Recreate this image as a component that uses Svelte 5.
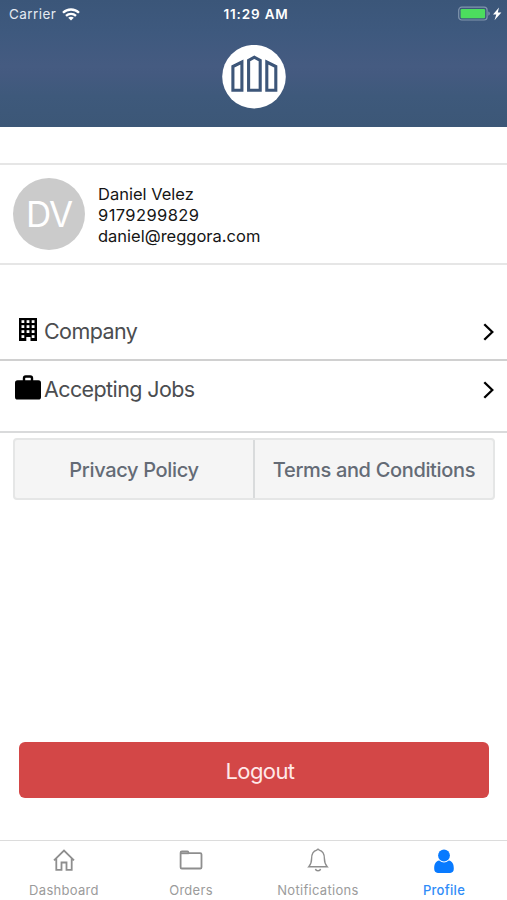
<script>
  const rows = [
    { label: 'Company', icon: 'building' },
    { label: 'Accepting Jobs', icon: 'briefcase' }
  ];
  const tabs = ['Dashboard', 'Orders', 'Notifications', 'Profile'];
</script>

<div class="screen">
  <header>
    <div class="status">
      <div class="left">
        <span class="carrier">Carrier</span>
        <svg width="18" height="13" viewBox="0 0 18 13" fill="none" stroke="#fff" stroke-width="2.3">
          <path d="M1 4.7C5.4.4 12.6.4 17 4.7M4 7.9c2.9-2.8 7.1-2.8 10 0" />
          <path d="M9 12.5 6.2 9.8c1.6-1.5 4-1.5 5.6 0z" fill="#fff" stroke="none" />
        </svg>
      </div>
      <span class="time">11:29 AM</span>
      <svg class="battery" width="44" height="16" viewBox="0 0 44 16">
        <rect x=".7" y="1.2" width="28.4" height="12.8" rx="3" fill="none" stroke="#8195ad" stroke-width="1.2" />
        <rect x="2.6" y="3" width="24.5" height="9.2" rx="1.2" fill="#4cdd5e" />
        <path d="M30.3 5.5c2 .6 2 3.6 0 4.2z" fill="#8195ad" />
        <path d="M41 1.4 35 8.6h3.3l-1.8 5.6L43.4 6.6h-3.6z" fill="#fff" />
      </svg>
    </div>
    <svg class="logo" width="64" height="64" viewBox="0 0 64 64">
      <circle cx="32" cy="31.7" r="31.8" fill="#fff" />
      <g fill="none" stroke="#3d5679" stroke-width="3.1">
        <path d="M10.9 45.2V21.5l9-4.4v28.1zM26.6 45.2V15.4l5.7-3.2 5.9 3.2v29.8zM44.8 45.2V17.1l9 4.4v23.7z" />
      </g>
    </svg>
  </header>

  <section class="user">
    <div class="avatar"><span>DV</span></div>
    <div class="details">
      <div class="name">Daniel Velez</div>
      <div class="phone">9179299829</div>
      <div class="email">daniel@reggora.com</div>
    </div>
  </section>

  <nav class="rows">
    {#each rows as row}
      <div class="row {row.icon}">
        {#if row.icon === 'building'}
          <svg class="ico" width="28" height="26" viewBox="0 0 28 26">
            <path d="M5 1h18v23h-6.5v-4h-4.2v4H5z" fill="#000" />
            <g fill="#fff">
              {#each [3.2, 8.2, 13.2] as y}
                {#each [7.5, 12.6, 17.7] as x}
                  <rect {x} {y} width="2.8" height="2.8" />
                {/each}
              {/each}
              <rect x="7.5" y="18.2" width="2.8" height="2.8" />
              <rect x="17.7" y="18.2" width="2.8" height="2.8" />
            </g>
          </svg>
        {:else}
          <svg class="ico" width="28" height="26" viewBox="0 0 28 26">
            <path d="M10 7V3.2q0-1.7 1.7-1.7h4.6q1.7 0 1.7 1.7V7" fill="none" stroke="#000" stroke-width="2.4" />
            <rect x="1" y="5.3" width="26" height="19.2" rx="2.6" />
          </svg>
        {/if}
        <span class="label">{row.label}</span>
        <svg class="chev" width="14" height="20" viewBox="0 0 14 20" fill="none" stroke="#000" stroke-width="2.3">
          <path d="m2.3 2.2 8 7.8-8 7.8" />
        </svg>
      </div>
    {/each}
  </nav>

  <div class="legal">
    <button><span class="privacy">Privacy Policy</span></button>
    <button><span class="terms">Terms and Conditions</span></button>
  </div>

  <button class="logout">Logout</button>

  <footer>
    {#each tabs as tab, i}
      <div class="tab" class:active={i === 3}>
        <svg width="26" height="28" viewBox="0 0 26 28" fill="none" stroke="#8e8e8e" stroke-width="1.8">
          {#if i === 0}
            <path d="M3 14.3 13 4.5l10 9.8M5.3 12.5v11.3h5.2v-7.3h5v7.3h5.2V12.5" />
          {:else if i === 1}
            <path d="M2.6 8.5V6.8q0-1.3 1.3-1.3h5.3q.9 0 1.3.9l.4.8h11.3q1.3 0 1.3 1.3v12.7q0 1.3-1.3 1.3H3.9q-1.3 0-1.3-1.3z" />
            <path d="M2.8 7.3h8" />
          {:else if i === 2}
            <path d="M11.8 4.1q1.2-2 2.4 0c4.5 1.1 5.2 4.8 5.2 8.5 0 4.5.8 6 2.8 8.1H3.8c2-2.1 2.8-3.6 2.8-8.1 0-3.7.7-7.4 5.2-8.5z" stroke-width="1.4" />
            <path d="M10.5 22.8c.4 2.5 4.6 2.5 5 0" stroke-width="1.5" />
          {:else}
            <g fill="#087aff" stroke="none">
              <circle cx="13" cy="9.5" r="5.9" />
              <path d="M8.2 14.6q4.8 3.8 9.6 0c3.7.7 5 3.7 5 8.2 0 2.7-1.3 4.1-3.6 4.1H6.8c-2.3 0-3.6-1.4-3.6-4.1 0-4.5 1.3-7.5 5-8.2z" />
            </g>
          {/if}
        </svg>
        <span>{tab}</span>
      </div>
    {/each}
  </footer>
</div>

<style>
  .screen {
    width: 100%;
    height: 900px;
    display: flex;
    flex-direction: column;
    background: #fff;
    font-family: Inter, "Liberation Sans", sans-serif;
    overflow: hidden;
  }
  .screen, .screen * { box-sizing: border-box; }
  svg { display: block; flex: none; }
  button { font: inherit; margin: 0; padding: 0; border: 0; }
  span, .details div { white-space: nowrap; }
  header {
    height: 127px;
    flex: none;
    display: flex;
    flex-direction: column;
    align-items: center;
    background: linear-gradient(#3b5679 0, #3e597e 25%, #455b81 52%, #445a80 58%, #3e597b 76%, #3c5777 100%);
  }
  .status {
    width: 100%;
    height: 28px;
    display: grid;
    grid-template-columns: 1fr auto 1fr;
    align-items: center;
    padding: 0 5px 0 9px;
    color: #fff;
    font-size: 13px;
  }
  .left { display: flex; align-items: center; gap: 6px; }
  .carrier { font-size: 13.5px; letter-spacing: .45px; color: #e4eaf1; }
  .time { font-size: 13.5px; font-weight: 600; letter-spacing: .85px; padding-left: 1px; }
  .battery { justify-self: end; }
  .logo { margin-top: 17px; }
  .user {
    height: 102px;
    margin-top: 36px;
    flex: none;
    border: solid #e6e6e6;
    border-width: 2px 0;
    display: flex;
    align-items: center;
    padding-left: 13px;
  }
  .avatar {
    width: 72px;
    height: 72px;
    border-radius: 50%;
    background: #cbcbcb;
    color: #fff;
    display: flex;
    align-items: center;
    justify-content: center;
    font-size: 35px;
    font-weight: 400;
    letter-spacing: -1px;
  }
  .details { margin-left: 13px; font-size: 16.5px; line-height: 21px; color: #151515; padding-top: 3px; }
  .phone { letter-spacing: .4px; }
  .rows { margin-top: 37px; }
  .row { display: flex; padding-left: 14px; padding-right: 11px; border-bottom: 2px solid #d0d0d0; }
  .row.building { height: 59px; padding-top: 15px; }
  .row.briefcase { height: 72px; padding-top: 14px; border-color: #d9dadb; }
  .label { font-size: 21.5px; letter-spacing: -.6px; line-height: 30px; margin: -1px 0 0 2px; flex: 1; color: #4b4d50; }
  .chev { margin-top: 5px; }
  .legal {
    height: 62px;
    margin: 5px 12px 0 13px;
    display: flex;
    flex: none;
    border: 2px solid #e5e6e6;
    border-radius: 4px;
    background: #f5f5f5;
  }
  .legal button { flex: 1; background: none; color: #646b75; font-size: 20px; font-weight: 500; letter-spacing: -.34px; padding-top: 2px; }
  .legal button + button { border-left: 2px solid #d9dbdc; }
  .logout {
    height: 56px;
    margin: auto 18px 42px 19px;
    padding: 2px 0 0 12px;
    flex: none;
    border-radius: 6px;
    background: #d34747;
    color: #ffe9e9;
    font-size: 22px;
    letter-spacing: -.6px;
  }
  footer { height: 60px; flex: none; display: flex; border-top: 1px solid #dcdcdc; }
  .tab {
    flex: 1;
    display: flex;
    flex-direction: column;
    align-items: center;
    padding: 5px 0 0 1px;
    color: #9b9b9b;
    font-size: 13px;
    line-height: 18px;
    letter-spacing: .3px;
  }
  .tab span { margin-top: 7px; }
  .active { color: #2f8cf8; font-weight: 500; padding-left: 0; }
</style>
